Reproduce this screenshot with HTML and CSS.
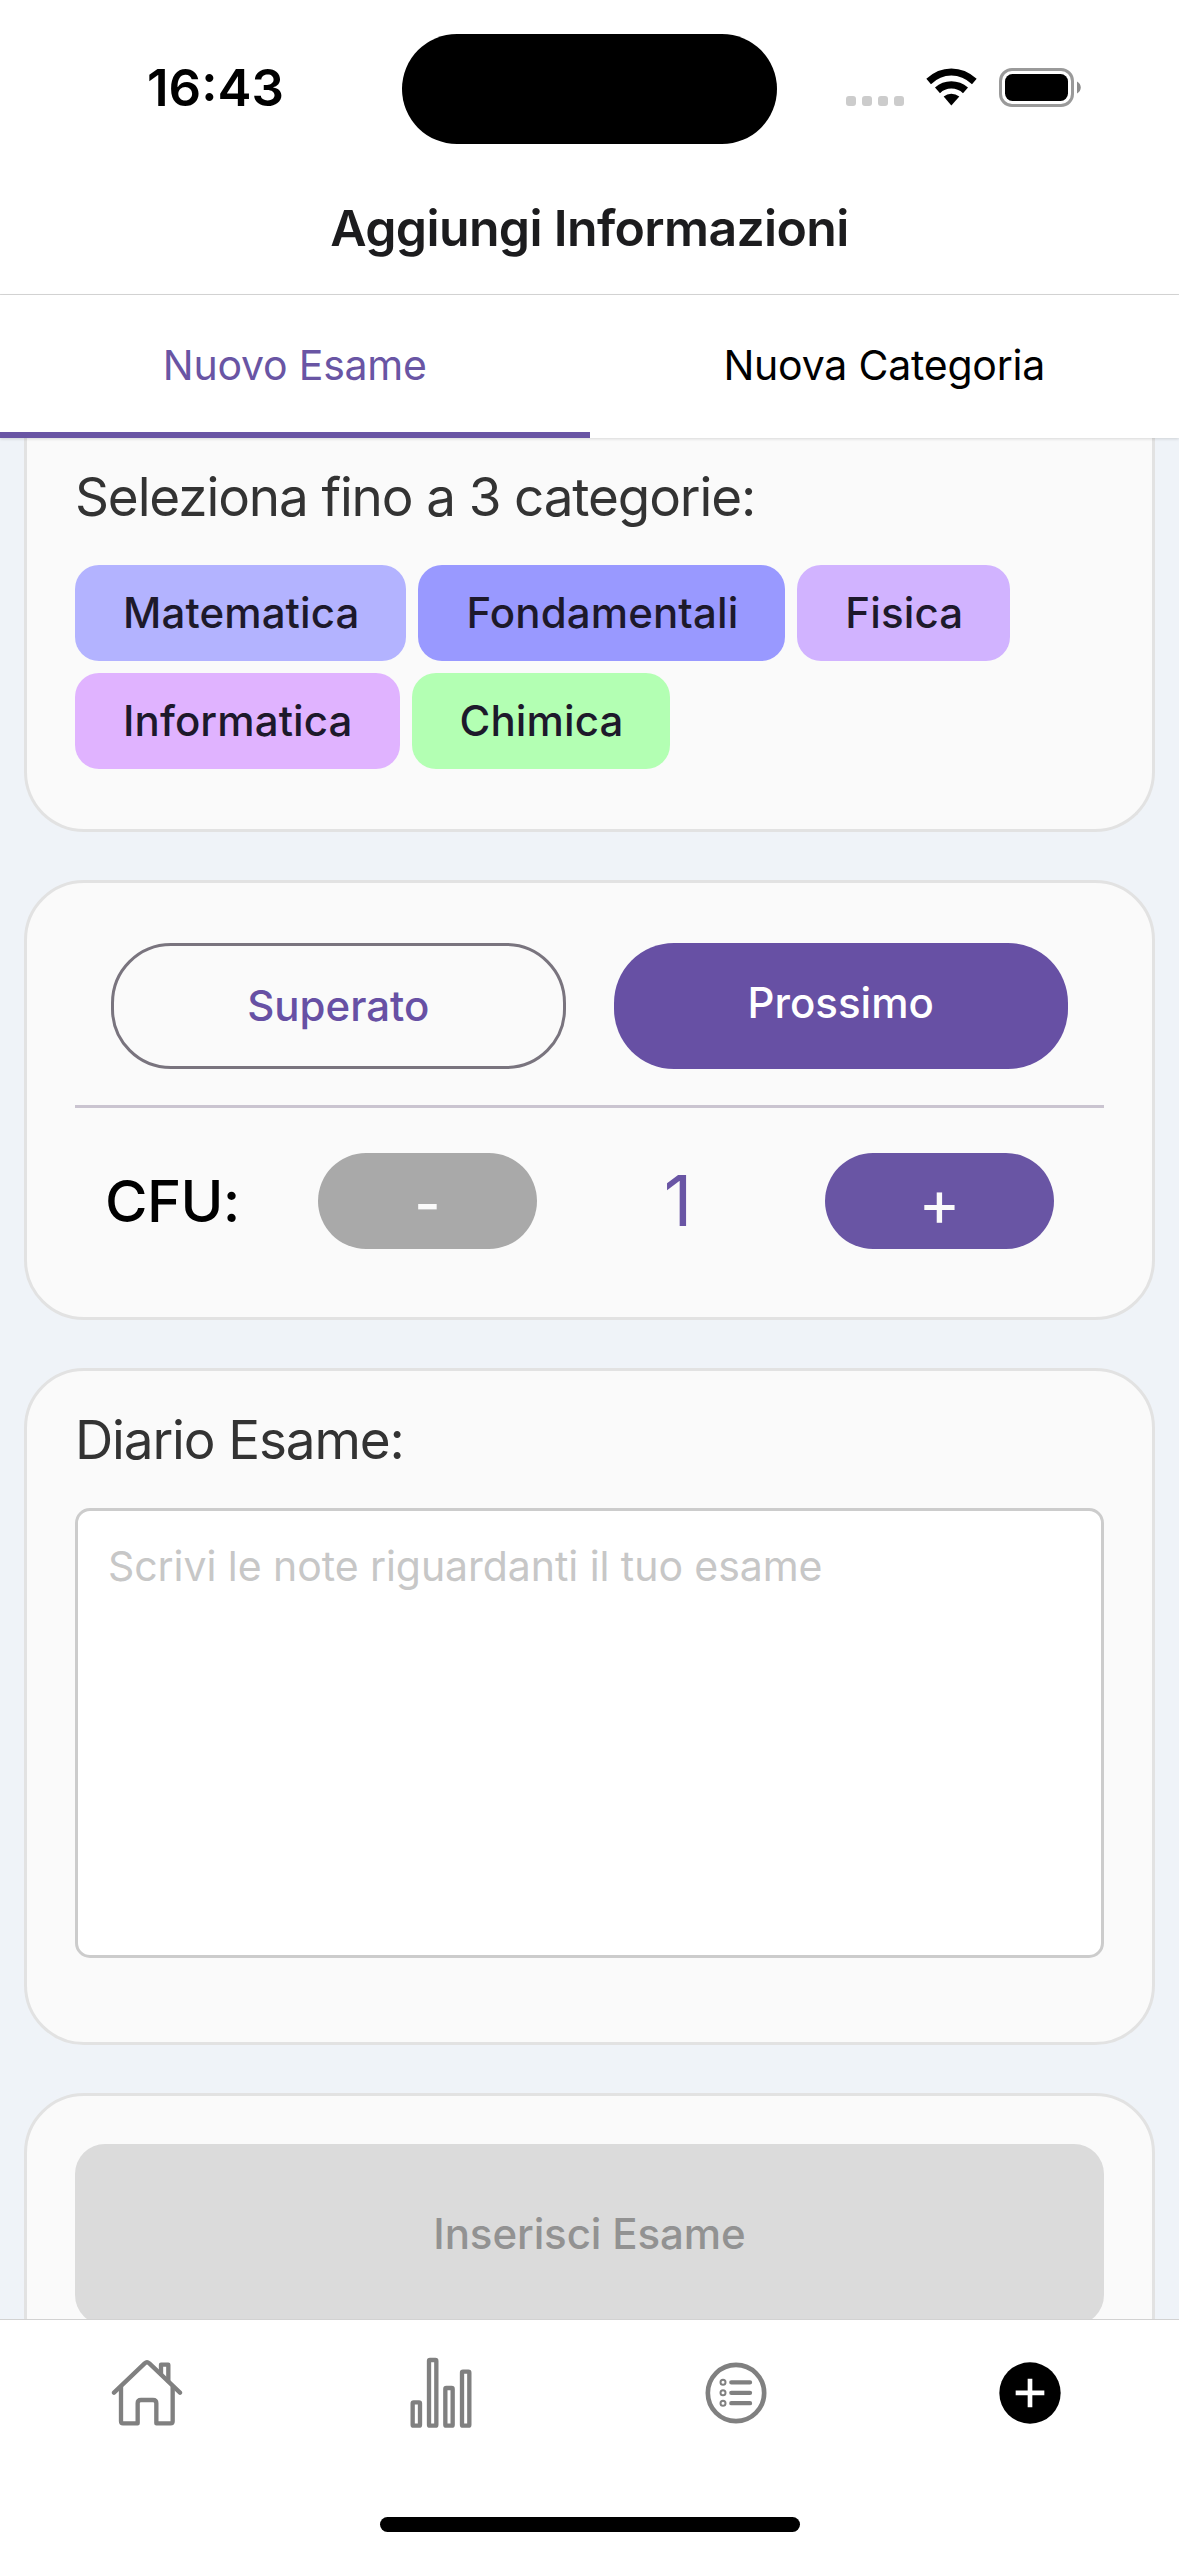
FILE: index.html
```
<!DOCTYPE html>
<html lang="it">
<head>
<meta charset="utf-8">
<title>Aggiungi Informazioni</title>
<link rel="stylesheet" href="styles.css">
</head>
<body>
<div class="screen">
  <div class="status-bar">
    <div class="time">16:43</div>
    <div class="island"></div>
    <div class="indicators">
      <svg class="dots" viewBox="0 0 58 10"><rect width="10" height="10" rx="3"/><rect x="16" width="10" height="10" rx="3"/><rect x="32" width="10" height="10" rx="3"/><rect x="48" width="10" height="10" rx="3"/></svg>
      <svg class="wifi" viewBox="318 56 153 113">
        <path d="M319 88Q352 57 394 57T470 88L456 104Q428 78 394 78T333 104Z"/>
        <path d="M345 114Q366 95 394 95T444 114L429 131Q414 117 394 117T360 131Z"/>
        <path d="M371 141Q381 133 394 133T418 141L394 168Z"/>
      </svg>
      <svg class="battery" viewBox="0 0 82 39">
        <rect x="1.5" y="1.5" width="72" height="36" rx="11.5" class="battery-case"/>
        <rect x="6" y="6" width="63" height="27" rx="7.5"/>
        <path d="M78 13.5C83 16 83 23 78 25.5Z" class="battery-tip"/>
      </svg>
    </div>
  </div>
  <header class="header"><h1>Aggiungi Informazioni</h1></header>
  <nav class="tabs">
    <a class="tab active">Nuovo Esame</a>
    <a class="tab">Nuova Categoria</a>
  </nav>
  <main class="content">
    <section class="card card-categories">
      <h2>Seleziona fino a 3 categorie:</h2>
      <div class="chips">
        <span class="chip math">Matematica</span>
        <span class="chip core">Fondamentali</span>
        <span class="chip physics">Fisica</span>
        <span class="chip computing">Informatica</span>
        <span class="chip chemistry">Chimica</span>
      </div>
    </section>
    <section class="card card-status">
      <div class="choices">
        <button class="choice outlined">Superato</button>
        <button class="choice filled">Prossimo</button>
      </div>
      <hr class="divider">
      <div class="cfu">
        <span class="cfu-label">CFU:</span>
        <button class="step minus">-</button>
        <span class="cfu-value">1</span>
        <button class="step plus">+</button>
      </div>
    </section>
    <section class="card card-diary">
      <h2>Diario Esame:</h2>
      <textarea class="notes" placeholder="Scrivi le note riguardanti il tuo esame"></textarea>
    </section>
    <section class="card card-submit">
      <button class="submit" disabled>Inserisci Esame</button>
    </section>
  </main>
  <footer class="tab-bar">
    <div class="nav">
      <a class="nav-item">
        <svg class="icon" viewBox="92 80 216 216" fill="none" stroke-width="13" stroke-linecap="round" stroke-linejoin="round">
          <path d="M101 187L193 99Q200 93 207 99L299 187"/>
          <path d="M242 130V103H264V152"/>
          <path d="M122 170V273Q122 279 128 279H172V219Q172 209 182 209H218Q228 209 228 219V279H271Q277 279 277 273V170"/>
        </svg>
      </a>
      <a class="nav-item">
        <svg class="icon" viewBox="977 80 216 216" fill="none" stroke-width="13" stroke-linejoin="round">
          <rect x="1000" y="216" width="22" height="70" rx="3"/>
          <rect x="1049" y="89" width="22" height="197" rx="3"/>
          <rect x="1098" y="173" width="22" height="113" rx="3"/>
          <rect x="1148" y="124" width="22" height="162" rx="3"/>
        </svg>
      </a>
      <a class="nav-item">
        <svg class="icon" viewBox="62 80 216 216" fill="none" stroke-linecap="round">
          <circle cx="170" cy="188" r="84.5" stroke-width="14"/>
          <path d="M156 156H212M156 187.500H212M156 218.500H212" stroke-width="13"/>
          <g stroke-width="6"><circle cx="131" cy="156" r="7.500"/><circle cx="131" cy="187.500" r="7.500"/><circle cx="131" cy="219" r="7.500"/></g>
        </svg>
      </a>
      <a class="nav-item current">
        <svg class="icon" viewBox="944 80 216 216">
          <circle cx="1052" cy="188" r="92"/>
          <path d="M1052 145V231M1009 187.500H1095" stroke-width="14"/>
        </svg>
      </a>
    </div>
    <div class="home-indicator"></div>
  </footer>
</div>
</body>
</html>
```
FILE: styles.css
```
* {
  box-sizing: border-box;
  margin: 0;
}

body {
  background: #fff;
  color: #000;
  font-family: Inter, "Noto Sans", sans-serif;
}

button {
  border: 0;
  padding: 0;
  font: 500 42px/50px Inter, "Noto Sans", sans-serif;
}

.screen {
  display: flex;
  flex-direction: column;
  width: 1179px;
  height: 2556px;
  overflow: hidden;
}

/* Status bar */
.status-bar {
  display: grid;
  grid-template-columns: 402px 375px 402px;
  align-items: center;
  height: 177px;
  flex: none;
}

.time {
  padding-left: 147px;
  font-size: 51px;
  font-weight: 600;
  line-height: 60px;
  letter-spacing: 0;
  margin-top: -2px;
}

.island {
  height: 110px;
  margin-top: 1px;
  border-radius: 55px;
  background: #000;
}

.indicators {
  display: flex;
  align-items: flex-end;
  padding-left: 69px;
  margin-bottom: 2px;
}

.dots {
  width: 58px;
  height: 10px;
  margin: 0 22px 1px 0;
  fill: #ccc;
}

.wifi {
  width: 51px;
  height: 38px;
  margin: 0 22px 1px 0;
}

.battery {
  width: 82px;
  height: 39px;
}

.battery-case {
  fill: none;
  stroke: #9a9a9a;
  stroke-width: 3;
}

.battery-tip {
  fill: #8c8c8c;
}

/* Header and top tabs */
.header {
  display: flex;
  justify-content: center;
  height: 118px;
  padding-top: 21px;
  flex: none;
  border-bottom: 1px solid #d8d8d8;
}

.header h1 {
  font-size: 50px;
  font-weight: 600;
  line-height: 60px;
  letter-spacing: -0.65px;
  color: #1c1c1e;
}

.tabs {
  display: flex;
  height: 143px;
  flex: none;
  position: relative;
  box-shadow: 0 1px 3px rgba(0, 0, 0, 0.14);
}

.tab {
  flex: 1;
  display: flex;
  align-items: center;
  justify-content: center;
  padding-top: 2px;
  border-bottom: 6px solid transparent;
  font-size: 41px;
  letter-spacing: -0.22px;
}

.tab.active {
  color: #6955a4;
  border-color: #6955a4;
}

/* Scrolling form */
.content {
  flex: 1;
  min-height: 0;
  overflow: hidden;
  display: flex;
  flex-direction: column;
  gap: 48px;
  padding: 0 24px;
  background: #eff3f8;
}

.card {
  flex: none;
  padding: 0 48px;
  border: 3px solid #e2e2e2;
  border-radius: 60px;
  background: #fafafa;
}

.card h2 {
  margin-bottom: 36px;
  font-size: 53px;
  font-weight: 400;
  line-height: 64px;
  letter-spacing: -1.13px;
  color: #333;
}

.card-categories {
  padding-top: 27px;
  padding-bottom: 60px;
  border-top: 0;
  border-radius: 0 0 60px 60px;
}

.chips {
  display: flex;
  flex-wrap: wrap;
  gap: 12px;
}

.chip {
  height: 96px;
  padding: 0 47px 0 48px;
  border-radius: 24px;
  font-size: 42px;
  font-weight: 500;
  line-height: 96px;
  letter-spacing: 0.12px;
  color: #1d192b;
}

.math { background: #b3b3ff; }
.core { background: #99f; }
.physics { background: #d1b3ff; }
.computing { background: #e0b3ff; }
.chemistry { background: #b3ffb3; }

.card-status {
  padding-top: 60px;
  padding-bottom: 68px;
}

.choices {
  display: grid;
  grid-template-columns: 1fr 1fr;
  gap: 48px;
  padding: 0 36px;
}

.choice {
  height: 126px;
  border-radius: 60px;
}

.choice.outlined {
  border: 3px solid #79747e;
  background: none;
  color: #6750a4;
}

.choice.filled {
  padding-bottom: 6px;
  background: #6750a4;
  color: #fff;
}

.divider {
  height: 3px;
  margin: 36px 0 45px;
  border: 0;
  background: #cac4d0;
}

.cfu {
  display: grid;
  grid-template-columns: 213px 219px 288px 229px;
  align-items: center;
  padding-left: 30px;
}

.cfu-label {
  font-size: 58px;
  font-weight: 500;
  line-height: 70px;
  letter-spacing: -0.6px;
}

.cfu-value {
  padding-right: 6px;
  font-size: 70px;
  line-height: 84px;
  text-align: center;
  color: #6955a4;
}

.step {
  height: 96px;
  border-radius: 48px;
  color: #fafafa;
}

.step.minus {
  padding-top: 5px;
  font-size: 57px;
  background: #a9a9a9;
}

.step.plus {
  padding-top: 3px;
  font-size: 64px;
  font-weight: 400;
  background: #6955a4;
}

.card-diary {
  padding-top: 37px;
  padding-bottom: 84px;
}

.notes {
  display: block;
  width: 100%;
  height: 450px;
  padding: 30px;
  border: 3px solid #ccc;
  border-radius: 15px;
  background: #fff;
  font: 400 41px/50px Inter, "Noto Sans", sans-serif;
  letter-spacing: -0.06px;
  resize: none;
}

.notes::placeholder {
  color: #c7c7c7;
}

.card-submit {
  padding-top: 48px;
  padding-bottom: 48px;
}

.submit {
  display: block;
  width: 100%;
  height: 181px;
  padding-bottom: 1px;
  border-radius: 30px;
  background: #dbdbdb;
  color: #929292;
  letter-spacing: -0.1px;
}

/* Bottom navigation */
.tab-bar {
  flex: none;
  height: 237px;
  display: flex;
  flex-direction: column;
  justify-content: space-between;
  align-items: center;
  padding: 37px 0 24px;
  border-top: 1px solid #d2d2d2;
  background: #fff;
}

.nav {
  display: grid;
  grid-template-columns: repeat(4, 1fr);
  width: 100%;
  padding-right: 2px;
}

.nav-item {
  display: flex;
  justify-content: center;
}

.icon {
  width: 72px;
  height: 72px;
  stroke: #808080;
}

.current .icon {
  fill: #000;
  stroke: #fff;
}

.current circle {
  stroke: none;
}

.home-indicator {
  width: 420px;
  height: 15px;
  border-radius: 8px;
  background: #000;
}
```
